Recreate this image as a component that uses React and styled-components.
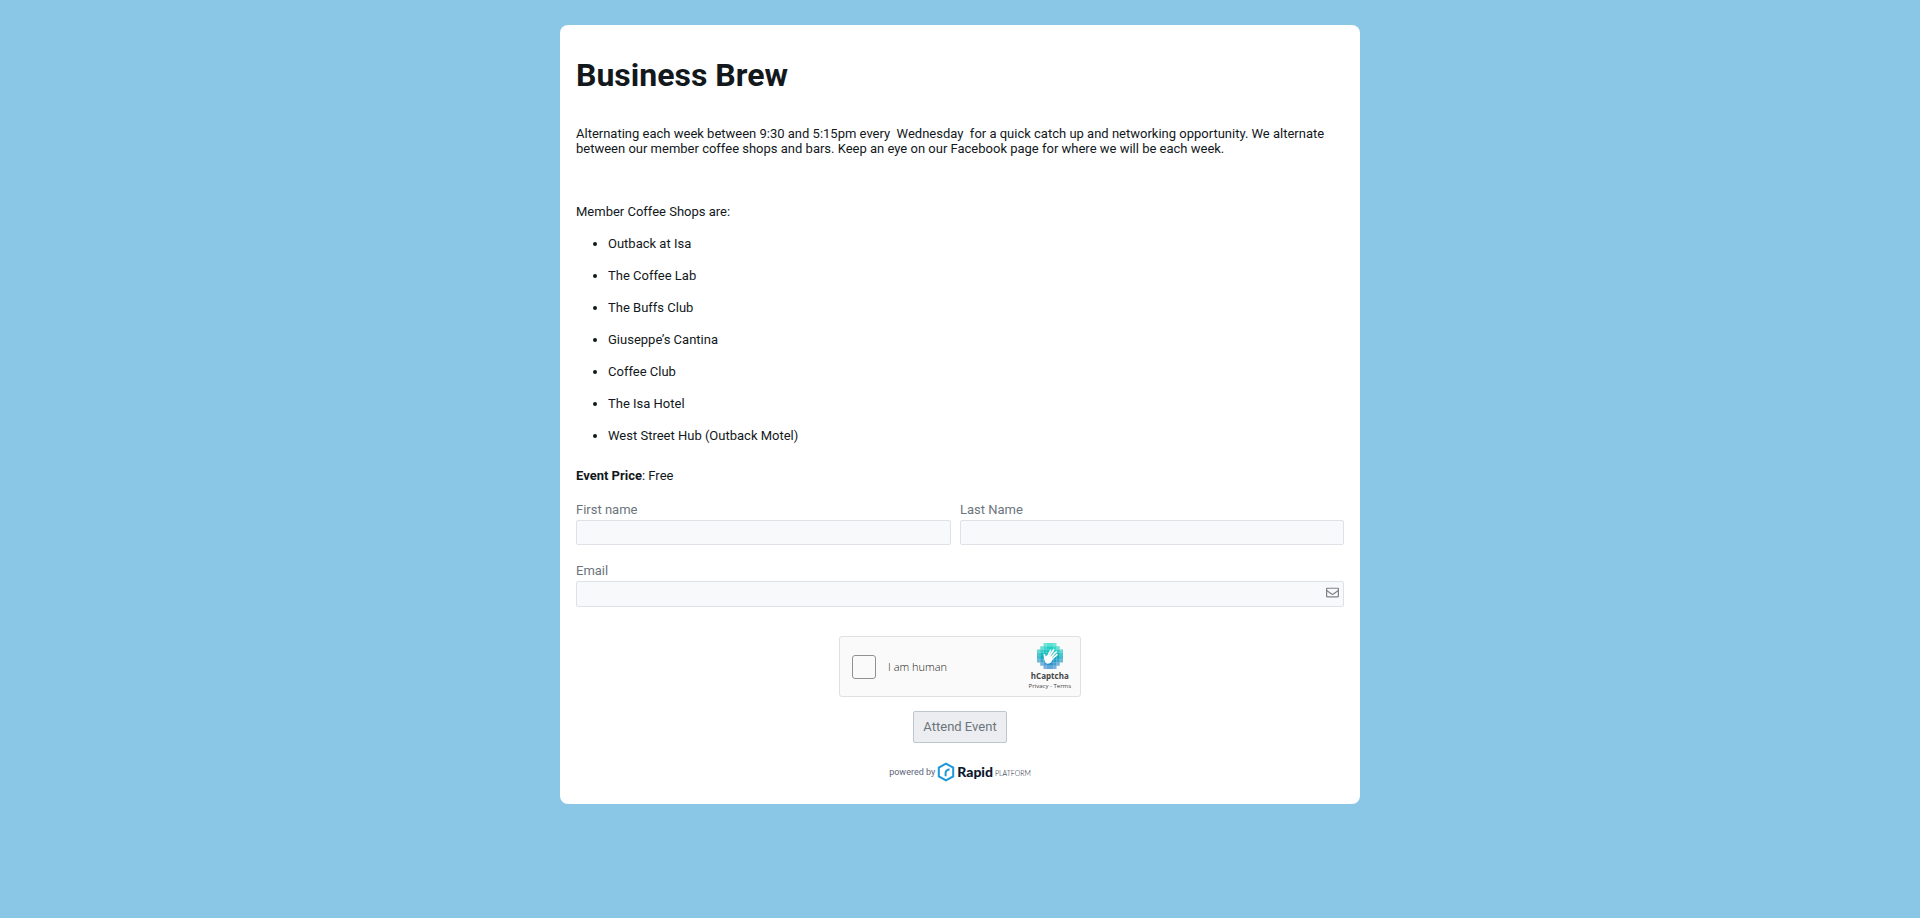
import React from 'react';
import styled, { createGlobalStyle } from 'styled-components';
import { FaRegEnvelope } from 'react-icons/fa';

const GlobalStyle = createGlobalStyle`
* {
  box-sizing: border-box;
}

body {
  margin: 0;
  background: #8ac7e6;
  color: #12181b;
  font-family: Roboto, "Liberation Sans", sans-serif;
  font-size: 13px;
  line-height: 15px;
}
`

const Wrapper = styled.div`
display: flex;
justify-content: center;
padding: 25px 16px;
`

const Card = styled.main`
width: 100%;
max-width: 800px;
padding: 31px 16px 20px;
background: white;
border-radius: 8px;
`

const Title = styled.h1`
margin: 0 0 32px;
font-size: 32px;
line-height: 38px;
font-weight: 700;
`

const Intro = styled.p`
margin: 0 0 48px;
white-space: pre-wrap;
`

const Text = styled.p`
margin: 0;
`

const ShopList = styled.ul`
display: flex;
flex-flow: column nowrap;
gap: 16px;
margin: 17px 0 24px;
padding-left: 32px;
line-height: 16px;
`

const Form = styled.form`
display: flex;
flex-flow: column nowrap;
gap: 18px;
margin-top: 19px;
`

const FieldRow = styled.div`
display: grid;
grid-template-columns: 375fr 384fr;
gap: 9px;
`

const Field = styled.div`
display: flex;
flex-flow: column nowrap;
gap: 3px;
`

const Label = styled.label`
color: #6c757d;
`

const InputBox = styled.div`
position: relative;
display: flex;

svg {
  position: absolute;
  top: 5px;
  right: 5px;
  color: #7b8288;
}
`

const Input = styled.input`
width: 100%;
height: ${props => props.$tall ? '26px' : '25px'};
padding: 4px 8px;
border: 1px solid #dee2e6;
border-radius: 2px;
background: #f8f9fb;
font: inherit;
color: inherit;
`

const Actions = styled.div`
display: flex;
flex-flow: column nowrap;
align-items: center;
gap: 14px;
margin-top: 11px;
`

const Captcha = styled.div`
display: flex;
align-items: center;
width: 242px;
height: 61px;
padding: 0 9px 0 12px;
border: 1px solid #e0e0e0;
border-radius: 3px;
background: #fafafa;
color: #444;
`

const CaptchaCheck = styled.input`
appearance: none;
width: 24px;
height: 24px;
margin: 0 12px 0 0;
border: 1px solid #919191;
border-radius: 3px;
background: #fafafa;
`

const CaptchaLabel = styled.label`
flex: 1;
color: #222;
font-family: "Open Sans", "Noto Sans", sans-serif;
font-size: 11px;
font-weight: 300;
`

const CaptchaBrand = styled.div`
display: flex;
flex-flow: column nowrap;
align-items: center;
font-family: "Open Sans", "Noto Sans", sans-serif;
`

const BrandName = styled.strong`
font-size: 8px;
line-height: 13px;
font-weight: 700;
`

const BrandLinks = styled.div`
font-size: 6px;
line-height: 9px;

a {
  color: inherit;
  text-decoration: none;
}
`

const SubmitBtn = styled.button`
height: 32px;
padding: 0 9px 1px;
border: 1px solid #bcc6cf;
border-radius: 2px;
background: #ebedf0;
color: #6c757d;
font: inherit;
`

const PoweredBy = styled.a`
display: flex;
align-items: center;
justify-content: center;
padding-bottom: 1px;
margin-top: -1px;
color: #5b6478;
font-size: 9px;
line-height: 20px;
text-decoration: none;

svg {
  margin: 0 2px;
}
`

const RapidName = styled.strong`
color: #0d1730;
font-family: Lato, sans-serif;
font-size: 14px;
font-weight: 900;
`

const RapidSub = styled.span`
margin: 3px 0 0 2px;
color: #0d1730;
font-family: Lato, sans-serif;
font-size: 7px;
font-weight: 300;
`

const shops = [
  'Outback at Isa',
  'The Coffee Lab',
  'The Buffs Club',
  'Giuseppe’s Cantina',
  'Coffee Club',
  'The Isa Hotel',
  'West Street Hub (Outback Motel)',
]

// one string per row of 4px tiles, each digit is the tile's opacity in tenths
const tiles = [
  '00677600',
  '06899860',
  '68999986',
  '79999997',
  '79999997',
  '68999986',
  '06899860',
  '00677600',
]
const tileColors = ['#12d6c0', '#08ccbc', '#00c0ba', '#00b0b6', '#009fba', '#0a90c2', '#1a86c8', '#2480cc']

const CaptchaLogo = () => (
  <svg width="26" height="26" viewBox="0 0 32 32" aria-hidden="true">
    {tiles.map((row, y) => row.split('').map((n, x) => (
      n !== '0' && <rect key={`${x}-${y}`} x={x * 4} y={y * 4} width="4" height="4" fill={tileColors[y]} opacity={n / 10} />
    )))}
    <g stroke="#fff" strokeWidth="2" strokeLinecap="round" fill="none">
      <path d="M12.8 17 16.6 9.3M15 17 20.4 8.6M17 18 23.6 10.8M18 20 24.6 14.4M10 19 9.2 14.4" />
    </g>
    <path d="M9 18Q11 15.5 13 15.5L18 17 19.2 20.6Q17 25.4 12.6 25.4Q9.4 24.6 9 21Z" fill="#fff" />
  </svg>
)

const RapidLogo = () => (
  <svg width="18" height="20" viewBox="0 0 18 20" fill="none" stroke="#1b98d8" strokeWidth="2" aria-hidden="true">
    <path d="M9 1.6 16.2 5.7V14.3L9 18.4 1.8 14.3V5.7Z" />
    <path d="M8.6 14.2V10.8Q8.6 8 12.6 7.2" />
  </svg>
)

class App extends React.Component {
  handleSubmit = event => {
    event.preventDefault();
  }

  render() {
    return (
      <Wrapper>
        <GlobalStyle />
        <Card>
          <Title>Business Brew</Title>
          <Intro>{'Alternating each week between 9:30 and 5:15pm every  Wednesday  for a quick catch up and networking opportunity. We alternate between our member coffee shops and bars. Keep an eye on our Facebook page for where we will be each week.'}</Intro>
          <Text>Member Coffee Shops are:</Text>
          <ShopList>
            {shops.map(shop => <li key={shop}>{shop}</li>)}
          </ShopList>
          <Text><b>Event Price</b>: Free</Text>
          <Form onSubmit={this.handleSubmit}>
            <FieldRow>
              <Field>
                <Label htmlFor="firstName">First name</Label>
                <Input id="firstName" type="text" />
              </Field>
              <Field>
                <Label htmlFor="lastName">Last Name</Label>
                <Input id="lastName" type="text" />
              </Field>
            </FieldRow>
            <Field>
              <Label htmlFor="email">Email</Label>
              <InputBox>
                <Input id="email" type="email" $tall />
                <FaRegEnvelope size={13} />
              </InputBox>
            </Field>
            <Actions>
              <Captcha>
                <CaptchaCheck id="human" type="checkbox" />
                <CaptchaLabel htmlFor="human">I am human</CaptchaLabel>
                <CaptchaBrand>
                  <CaptchaLogo />
                  <BrandName>hCaptcha</BrandName>
                  <BrandLinks><a href="#privacy">Privacy</a> - <a href="#terms">Terms</a></BrandLinks>
                </CaptchaBrand>
              </Captcha>
              <SubmitBtn type="submit">Attend Event</SubmitBtn>
            </Actions>
            <PoweredBy href="#rapid">
              powered by
              <RapidLogo />
              <RapidName>Rapid</RapidName>
              <RapidSub>PLATFORM</RapidSub>
            </PoweredBy>
          </Form>
        </Card>
      </Wrapper>
    )
  }
}

export default App;
